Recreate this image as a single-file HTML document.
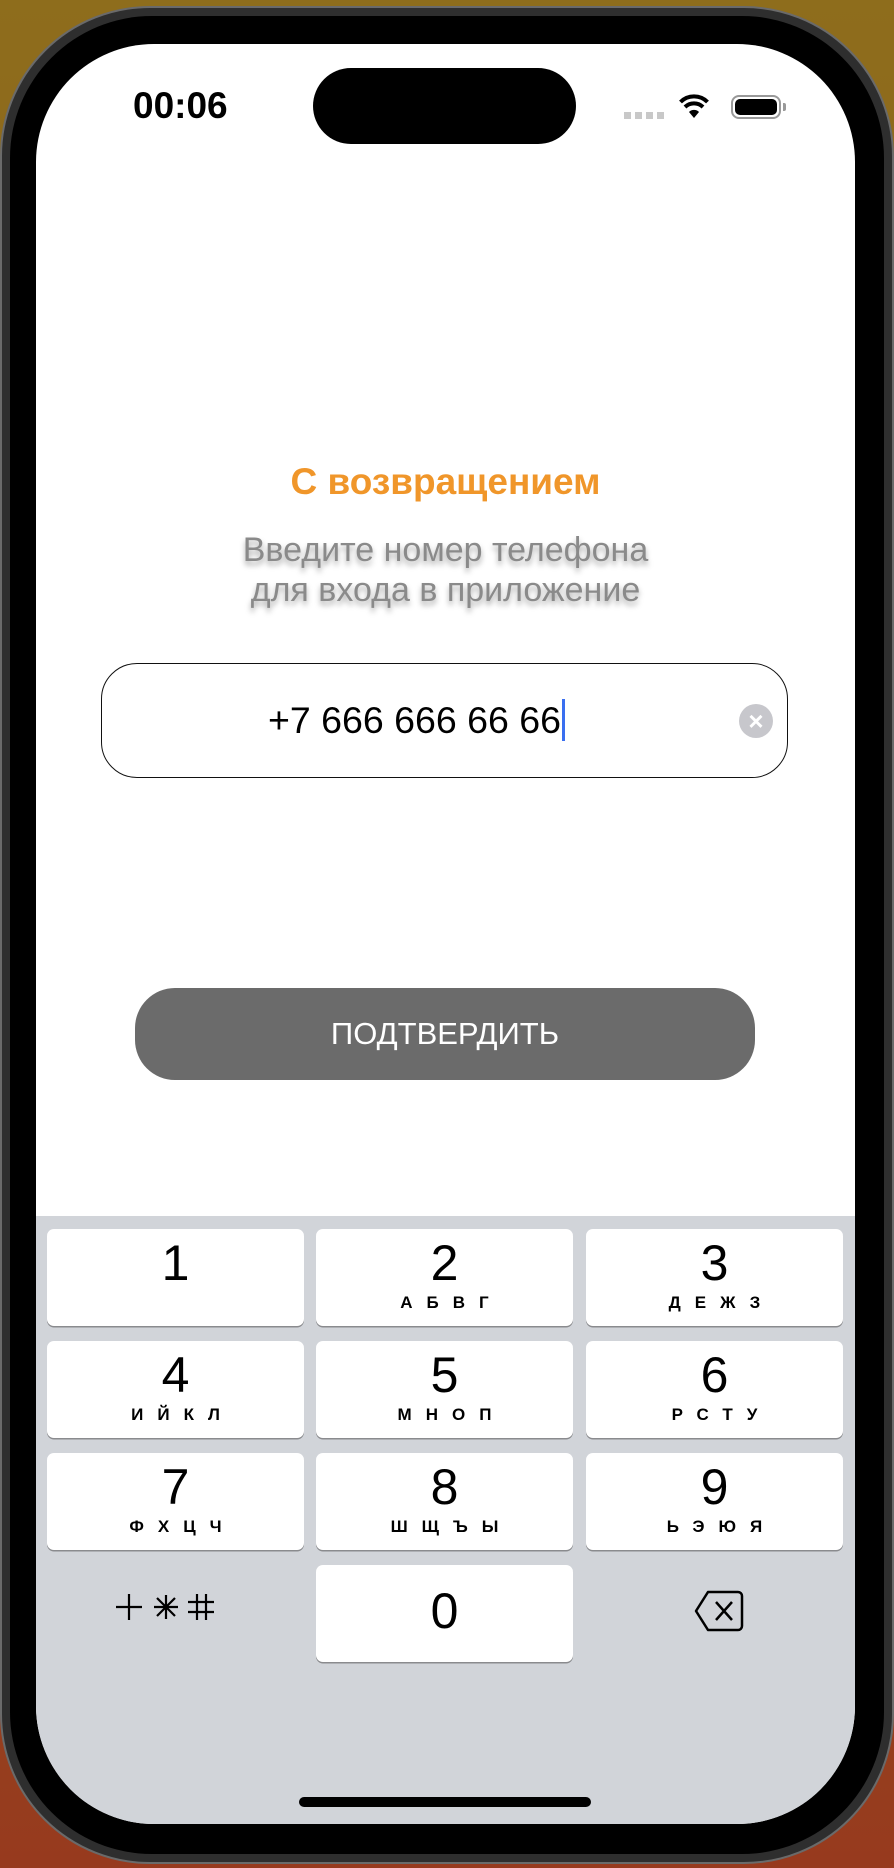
<!DOCTYPE html>
<html><head><meta charset="utf-8"><style>
*{margin:0;padding:0;box-sizing:border-box}
body{width:894px;height:1868px;overflow:hidden;background:linear-gradient(180deg,#8e6d1c 0%,#8f5a1c 50%,#973a1e 100%);font-family:"Liberation Sans","DejaVu Sans",sans-serif;position:relative}
.frame{position:absolute;left:0;top:6px;width:894px;height:1858px;border-radius:150px;background:#2e2e2e;border:2px solid #6a6a6a}
.bezel{position:absolute;left:10px;top:16px;width:874px;height:1838px;border-radius:142px;background:#000}
.screen{position:absolute;left:36px;top:44px;width:819px;height:1780px;border-radius:118px;background:#fff;overflow:hidden}
.abs{position:absolute}
.kb{position:absolute;left:0;top:1172px;width:819px;height:608px;background:#d1d4d9}
.key{position:absolute;width:257px;height:97px;background:#fff;border-radius:7px;box-shadow:0 1.5px 0 #8a8b8e;text-align:center}
.key .d{position:absolute;left:0;right:0;top:4px;font-size:50px;line-height:60px;color:#000}
.key .l{position:absolute;left:0;right:0;top:64px;font-size:17px;font-weight:bold;letter-spacing:14px;padding-left:14px;color:#000}
</style></head><body>
<div class="frame"></div>
<div class="bezel"></div>
<div class="screen">
  <div class="abs" style="left:97px;top:41px;font-size:37px;font-weight:bold;color:#000;letter-spacing:0px">00:06</div>
  <div class="abs" style="left:277px;top:24px;width:263px;height:76px;border-radius:38px;background:#000"></div>
  <div class="abs" style="left:588px;top:68px;width:42px;height:7px;background:repeating-linear-gradient(90deg,#c8c8c8 0 7px,transparent 7px 11px)"></div>
  <svg class="abs" style="left:643px;top:50px" width="30" height="24" viewBox="0 0 30 24"><path d="M15 24 L10 18 A7 7 0 0 1 20 18 Z" fill="#000"/><path d="M6 13 A13 13 0 0 1 24 13" stroke="#000" stroke-width="4" fill="none"/><path d="M1.5 8 A19 19 0 0 1 28.5 8" stroke="#000" stroke-width="4" fill="none"/></svg>
  <div class="abs" style="left:695px;top:51px;width:50px;height:24px;border:2px solid #999;border-radius:8px"></div>
  <div class="abs" style="left:699px;top:55px;width:42px;height:16px;background:#000;border-radius:5px"></div>
  <div class="abs" style="left:747px;top:59px;width:3px;height:8px;background:#999;border-radius:0 2px 2px 0"></div>

  <div class="abs" style="left:0;width:819px;top:417px;text-align:center;font-size:37px;font-weight:bold;color:#f0962a">С возвращением</div>
  <div class="abs" style="left:0;width:819px;top:486px;text-align:center;font-size:34px;line-height:40px;color:#8a8a8a;text-shadow:0 4px 6px rgba(0,0,0,0.35)">Введите номер телефона<br>для входа в приложение</div>

  <div class="abs" style="left:65px;top:619px;width:687px;height:115px;border:1.5px solid #111;border-radius:36px"></div>
  <div class="abs" style="left:232px;top:655px;font-size:37.5px;color:#000;white-space:nowrap">+7 666 666 66 66<span style="display:inline-block;width:3px;height:42px;background:#3a6ff0;vertical-align:-8px;margin-left:1px"></span></div>
  <div class="abs" style="left:703px;top:660px;width:34px;height:34px;border-radius:50%;background:#c7c7cc;color:#fff;text-align:center;font-size:26px;line-height:34px;font-weight:bold">×</div>

  <div class="abs" style="left:99px;top:944px;width:620px;height:92px;border-radius:40px;background:#6b6b6b;color:#fff;text-align:center;font-size:31px;line-height:92px">ПОДТВЕРДИТЬ</div>

  <div class="kb">
    <div class="key" style="left:11px;top:13px"><div class="d">1</div></div>
    <div class="key" style="left:280px;top:13px"><div class="d">2</div><div class="l">АБВГ</div></div>
    <div class="key" style="left:550px;top:13px"><div class="d">3</div><div class="l">ДЕЖЗ</div></div>
    <div class="key" style="left:11px;top:125px"><div class="d">4</div><div class="l">ИЙКЛ</div></div>
    <div class="key" style="left:280px;top:125px"><div class="d">5</div><div class="l">МНОП</div></div>
    <div class="key" style="left:550px;top:125px"><div class="d">6</div><div class="l">РСТУ</div></div>
    <div class="key" style="left:11px;top:237px"><div class="d">7</div><div class="l">ФХЦЧ</div></div>
    <div class="key" style="left:280px;top:237px"><div class="d">8</div><div class="l">ШЩЪЫ</div></div>
    <div class="key" style="left:550px;top:237px"><div class="d">9</div><div class="l">ЬЭЮЯ</div></div>
    <div class="key" style="left:280px;top:349px"><div class="d" style="top:16px">0</div></div>
    <svg class="abs" style="left:78px;top:376px" width="104" height="30" viewBox="0 0 104 30"><g stroke="#000" stroke-width="2.2" fill="none"><path d="M2 15H28M15 2V28"/><path d="M40 15H64M52 3V27M43 6L61 24M61 6L43 24"/><path d="M74 10H100M74 20H100M83 2V28M92 2V28"/></g></svg>
    <svg class="abs" style="left:658px;top:374px" width="50" height="42" viewBox="0 0 50 42"><path d="M14 2H44A4 4 0 0 1 48 6V36A4 4 0 0 1 44 40H14L2 21Z" stroke="#000" stroke-width="2.5" fill="none" stroke-linejoin="round"/><path d="M22 12L38 30M38 12L22 30" stroke="#000" stroke-width="2.5"/></svg>
    <div class="abs" style="left:263px;top:581px;width:292px;height:10px;border-radius:5px;background:#000"></div>
  </div>
</div>
</body></html>
